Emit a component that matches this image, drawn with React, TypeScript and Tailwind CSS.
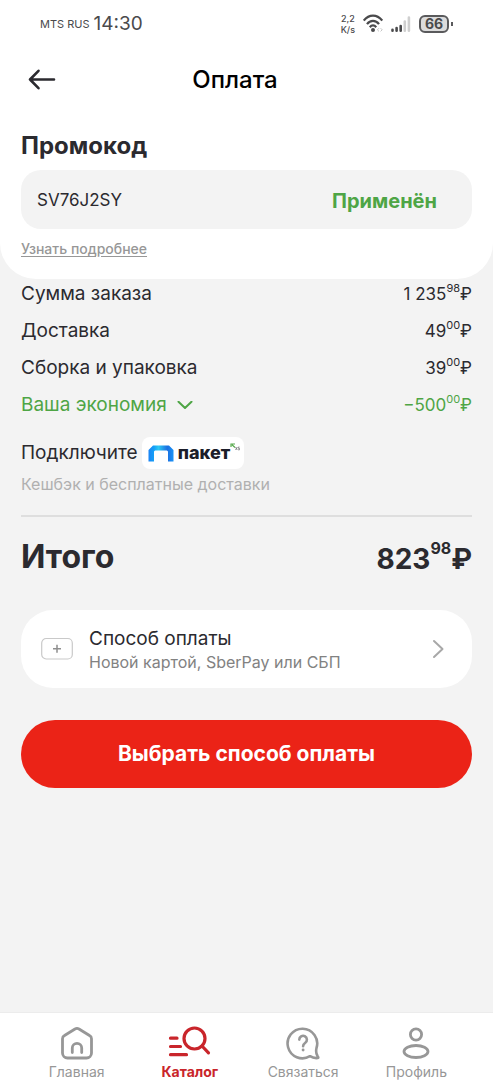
import type { ReactNode } from 'react';

interface PriceProps {
  whole: string;
  cents: string;
}

const Price = ({ whole, cents }: PriceProps) => (
  <span className="flex items-center text-[17px] leading-7 whitespace-nowrap">
    <span>{whole}</span>
    <span className="self-start text-[11px] leading-4">{cents}</span>
    <span>₽</span>
  </span>
);

const SUMMARY = [
  { label: 'Сумма заказа', whole: '1 235', cents: '98' },
  { label: 'Доставка', whole: '49', cents: '00' },
  { label: 'Сборка и упаковка', whole: '39', cents: '00' },
];

const StatusBar = () => (
  <div className="flex h-12 items-center justify-between pr-10 pl-10 text-[#4a4a4c]">
    <div className="flex items-center gap-1 whitespace-nowrap">
      <span className="text-[11px]">MTS RUS</span>
      <span className="text-[19px]">14:30</span>
    </div>
    <div className="flex items-center gap-2">
      <div className="text-center text-[9px] leading-[11px] font-medium">
        <div>2,2</div>
        <div>K/s</div>
      </div>
      <svg className="h-5 w-5" viewBox="0 0 20 20" fill="none" stroke="#4a4a4c" strokeWidth="2.2">
        <path d="M0.8 6.6C6 0 14 0 19.2 6.6" />
        <path d="M4 10.2C7.3 5.8 12.7 5.8 16 10.2" />
        <path d="M6.8 13.2C8.7 10.8 11.3 10.8 13.2 13.2" />
        <circle cx="10" cy="16" r="2" fill="#4a4a4c" stroke="none" />
        <path d="M16 14.2l-1.6 1.6L16 17.4M17.6 14.2l1.6 1.6-1.6 1.6" stroke="#c4c4c4" strokeWidth="1" />
      </svg>
      <svg className="h-5 w-5" viewBox="0 0 20 20" strokeWidth="2.6" strokeLinecap="round">
        <path d="M1.5 15.7v1M5.6 14v2.7M9.7 12v4.7" stroke="#4a4a4c" />
        <path d="M13.8 7.5v9.2M17.9 3.5v13.2" stroke="#cfcfcf" />
      </svg>
      <div className="flex items-center gap-0.5">
        <span className="flex h-[18px] w-[30px] items-center justify-center rounded-md border-2 border-[#5a5a5c] bg-[#dcdcdc] text-sm font-bold">
          66
        </span>
        <span className="h-1 w-0.5 bg-[#5a5a5c]" />
      </div>
    </div>
  </div>
);

const PaketBadge = () => (
  <span className="flex h-8 items-center gap-1 rounded-lg bg-white pr-1 pl-[6px]">
    <svg className="h-[17px] w-[26px]" viewBox="0 0 26 17" aria-hidden="true">
      <defs>
        <linearGradient id="paket" x1="0" y1="0" x2="1" y2="0">
          <stop offset="0" stopColor="#1b84f5" />
          <stop offset="0.22" stopColor="#14a0f7" />
          <stop offset="0.4" stopColor="#2cc8f3" />
          <stop offset="0.75" stopColor="#1b6fe0" />
          <stop offset="1" stopColor="#1a94f7" />
        </linearGradient>
      </defs>
      <path d="M0.5 16.500V5L5 0.500h16l4.500 4.500v11.500h-5.500V6.500l-1-1H7l-1 1v10z" fill="url(#paket)" />
    </svg>
    <span className="text-lg font-extrabold text-[#1b1d29]">пакет</span>
    <svg className="-ml-1 mb-3 h-2 w-[10px]" viewBox="0 0 10 8" fill="none" aria-hidden="true">
      <path d="M1 4V1H5M2 1.800L5 4.500" stroke="#55a84b" strokeWidth="1.2" />
      <path d="M5.500 4l1.800 3M7.300 4L5.500 7M9.500 4H8.300v1.300h1.200V6.800H8" stroke="#77777a" strokeWidth="0.8" />
    </svg>
  </span>
);

interface NavItemProps {
  label: string;
  active?: boolean;
  children: ReactNode;
}

const NavItem = ({ label, active, children }: NavItemProps) => (
  <a
    href="#"
    aria-current={active ? 'page' : undefined}
    className={`flex flex-col items-center gap-px text-sm leading-5 ${active ? 'font-bold text-[#c9252b]' : 'text-[#979797]'}`}
  >
    {children}
    {label}
  </a>
);

const BottomNav = () => (
  <nav className="mt-auto grid grid-cols-4 border-t border-[#ececec] bg-white px-5 pt-3 pb-2">
    <NavItem label="Главная">
      <svg className="h-9 w-9" viewBox="0 0 36 36" fill="none" stroke="currentColor" strokeWidth="2.8" strokeLinecap="round" strokeLinejoin="round">
        <path d="M16 4a4 4 0 0 1 4 0L30.5 10.500a3.8 3.8 0 0 1 2 3.300V28a5 5 0 0 1-5 5H8.500a5 5 0 0 1-5-5V13.800a3.8 3.8 0 0 1 2-3.300z" />
        <path d="M13.3 27.500v-4.500a4.7 4.7 0 0 1 9.4 0V27.500" />
      </svg>
    </NavItem>
    <NavItem label="Каталог" active>
      <svg className="h-9 w-11" viewBox="0 0 44 36" fill="none" stroke="currentColor" strokeWidth="3.2" strokeLinecap="round">
        <circle cx="26.5" cy="13.5" r="10.5" />
        <path d="M34 21l6.500 6.800M2.500 13.200h6.500M2.500 21.500h10M2.500 29.700h16" />
      </svg>
    </NavItem>
    <NavItem label="Связаться">
      <svg className="h-9 w-9" viewBox="0 0 36 36" fill="none" stroke="currentColor" strokeWidth="2.6" strokeLinecap="round" strokeLinejoin="round">
        <path d="M31.5 23A14.8 14.8 0 1 0 25 31.200C27 32.500 30 33.300 32.800 33C33.600 32.900 33.300 32 32.500 31C31.300 29 30.800 26 31.500 23z" />
        <path d="M14.3 14.600a3.8 3.8 0 1 1 6 3.100c-1.500 1.100-2.200 1.900-2.200 3.500" />
        <circle cx="18.1" cy="25" r="0.7" fill="currentColor" strokeWidth="1.5" />
      </svg>
    </NavItem>
    <NavItem label="Профиль">
      <svg className="h-9 w-9" viewBox="0 0 36 36" fill="none" stroke="currentColor" strokeWidth="2.8">
        <circle cx="18" cy="9.5" r="5.6" />
        <ellipse cx="18" cy="26.5" rx="12" ry="6" />
      </svg>
    </NavItem>
  </nav>
);

const App = () => (
  <div className="flex min-h-screen flex-col bg-[#f3f3f3] font-['Inter','Noto_Sans',sans-serif] text-[#2b2a2f]">
    <header className="rounded-b-[36px] bg-white pb-5">
      <StatusBar />
      <div className="grid h-16 grid-cols-[1fr_auto_1fr] items-center pr-[51px] pl-7">
        <button type="button" aria-label="Назад" className="w-7">
          <svg className="h-6 w-7" viewBox="0 0 28 24" fill="none" stroke="#2b2a2f" strokeWidth="2.6" strokeLinecap="round" strokeLinejoin="round">
            <path d="M26 11.5H2M10.5 2.8L2 11.5l8.5 8.7" />
          </svg>
        </button>
        <h1 className="text-2xl font-medium text-black">Оплата</h1>
      </div>
      <div className="px-[21px] pt-[18px]">
        <label htmlFor="promo" className="block text-2xl leading-8 font-bold">
          Промокод
        </label>
        <div className="mt-2 flex h-[59px] items-center justify-between rounded-[20px] bg-[#f3f3f3] pt-0.5 pr-[35px] pl-4">
          <input id="promo" readOnly defaultValue="SV76J2SY" className="w-40 min-w-0 bg-transparent text-[17px] outline-none" />
          <span className="text-xl font-bold text-[#4ea545]">Применён</span>
        </div>
        <a href="#" className="mt-2.5 block w-fit text-sm leading-5 font-medium text-[#979797] underline underline-offset-2">
          Узнать подробнее
        </a>
      </div>
    </header>

    <main className="px-[21px] pb-8">
      <dl className="flex flex-col gap-[9px] pt-px text-[19px] leading-7">
        {SUMMARY.map((row) => (
          <div key={row.label} className="flex justify-between">
            <dt>{row.label}</dt>
            <dd>
              <Price whole={row.whole} cents={row.cents} />
            </dd>
          </div>
        ))}
        <div className="flex justify-between text-[#4ea545]">
          <dt>
            <button type="button" className="flex items-center gap-[10px]">
              Ваша экономия
              <svg className="h-2 w-4" viewBox="0 0 16 8" fill="none" stroke="currentColor" strokeWidth="2" strokeLinecap="round" strokeLinejoin="round">
                <path d="M1.5 0.8L8 7l6.5-6.2" />
              </svg>
            </button>
          </dt>
          <dd>
            <Price whole="−500" cents="00" />
          </dd>
        </div>
      </dl>

      <div className="mt-[18px] flex items-center gap-1 text-[19px] leading-7">
        <span>Подключите</span>
        <PaketBadge />
      </div>
      <p className="mt-[3px] text-base leading-6 text-[#b0b0b0]">Кешбэк и бесплатные доставки</p>

      <hr className="mt-[19px] border-t-2 border-[#dedede]" />

      <div className="mt-5 flex h-10 items-center justify-between font-bold">
        <h2 className="text-[32px]">Итого</h2>
        <span className="flex items-center pt-1 text-[28px]">
          <span>823</span>
          <span className="self-start text-base leading-5">98</span>
          <span>₽</span>
        </span>
      </div>

      <button type="button" className="mt-[33px] flex h-[78px] w-full items-center rounded-[32px] bg-white pr-7 pl-5 text-left">
        <svg className="h-6 w-8" viewBox="0 0 32 24" fill="none" aria-hidden="true">
          <rect x="0.7" y="1.5" width="30.6" height="20.5" rx="4.5" stroke="#c9c9c9" strokeWidth="1.2" />
          <path d="M16 7.7v8M12 11.7h8" stroke="#8f8f8f" strokeWidth="1.5" />
        </svg>
        <span className="ml-4 flex grow flex-col pt-0.5">
          <span className="text-[19px] leading-6">Способ оплаты</span>
          <span className="text-base leading-[22px] text-[#828282]">Новой картой, SberPay или СБП</span>
        </span>
        <svg className="h-5 w-3" viewBox="0 0 12 20" fill="none" stroke="#a8a8a8" strokeWidth="2" strokeLinecap="round" strokeLinejoin="round">
          <path d="M2 2l8.5 8L2 18" />
        </svg>
      </button>

      <button type="button" className="mt-8 h-[68px] w-full rounded-full bg-[#eb2317] text-[21px] font-bold text-white">
        Выбрать способ оплаты
      </button>
    </main>

    <BottomNav />
  </div>
);

export default App;
